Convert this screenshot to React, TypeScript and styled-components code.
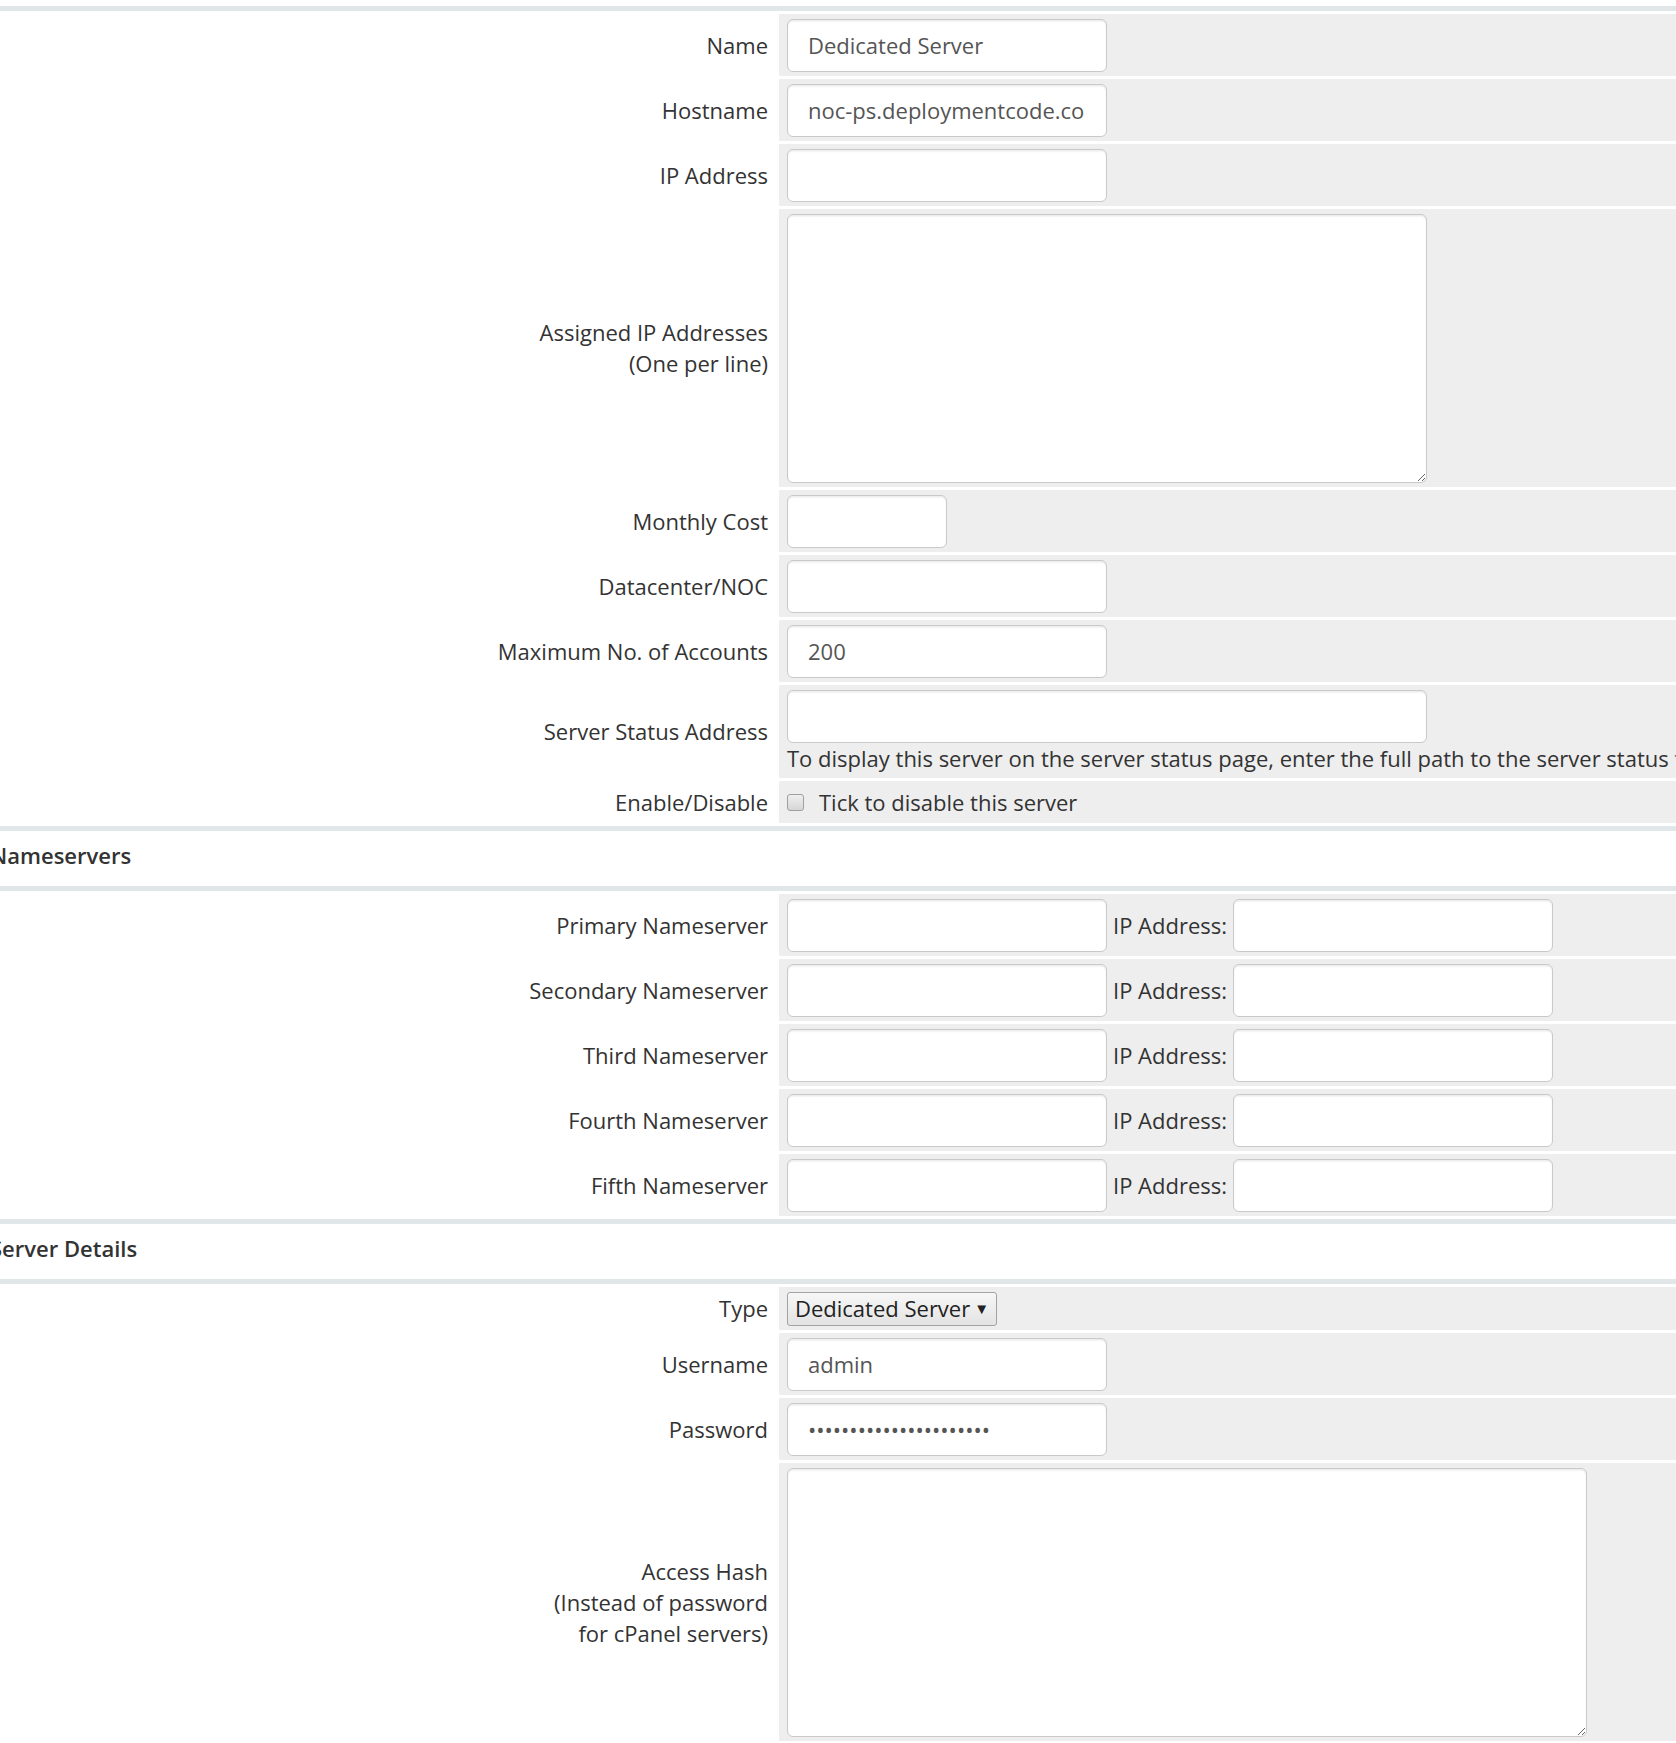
import React from "react";
import styled, { createGlobalStyle } from "styled-components";

// Styles globaux
const GlobalStyle = createGlobalStyle`
  html, body {
    margin: 0;
    padding: 0;
    background: #ffffff;
    overflow: hidden;
  }
  body {
    font-family: "Open Sans", "Noto Sans", "Liberation Sans", sans-serif;
    font-size: 22px;
    line-height: 31px;
    color: #333333;
  }
`;

// Styled Components
const Page = styled.div`
  width: 100%;
  padding-top: 6px;
  overflow: hidden;
`;

const Separator = styled.div`
  height: 5px;
  background-color: #e1e6e8;
`;

const SectionTitle = styled.h3`
  box-sizing: border-box;
  margin: 0 0 0 -10px;
  height: 55px;
  padding-bottom: 6px;
  display: flex;
  align-items: center;
  font-size: 22px;
  font-weight: 600;
  color: #333333;
  white-space: nowrap;
`;

const RowGroup = styled.div`
  display: flex;
  flex-direction: column;
  gap: 3px;
  padding: 3px 0;
`;

const Row = styled.div`
  display: grid;
  grid-template-columns: 779px 1fr;
`;

const Label = styled.div`
  align-self: center;
  text-align: right;
  padding-right: 11px;
  white-space: nowrap;
`;

const Field = styled.div<{ $inline?: boolean }>`
  background-color: #eeeeee;
  padding: 4.5px 8px;
  display: flex;
  flex-direction: ${(p) => (p.$inline ? "row" : "column")};
  align-items: ${(p) => (p.$inline ? "center" : "flex-start")};
  gap: ${(p) => (p.$inline ? "6px" : "0")};
  min-width: 0;
  white-space: nowrap;
`;

const TextInput = styled.input<{ $width?: number }>`
  box-sizing: border-box;
  width: ${(p) => p.$width ?? 320}px;
  height: 53px;
  padding: 0 20px;
  border: 1.5px solid #c9c9c9;
  border-radius: 6px;
  box-shadow: inset 0 1.5px 1.5px rgba(0, 0, 0, 0.08);
  background: #ffffff;
  font-family: inherit;
  font-size: 22px;
  color: #555555;
  outline: none;
`;

const TextArea = styled.textarea<{ $width: number }>`
  box-sizing: border-box;
  width: ${(p) => p.$width}px;
  height: 269px;
  padding: 8px 20px;
  border: 1.5px solid #c9c9c9;
  border-radius: 6px;
  box-shadow: inset 0 1.5px 1.5px rgba(0, 0, 0, 0.08);
  background: #ffffff;
  font-family: inherit;
  font-size: 22px;
  color: #555555;
  outline: none;
  display: block;
`;

const HelpText = styled.span`
  color: #333333;
  line-height: 31px;
`;

const CheckRow = styled.label`
  display: flex;
  align-items: center;
  height: 33px;
  gap: 15px;
`;

const CheckBox = styled.span`
  box-sizing: border-box;
  width: 17px;
  height: 17px;
  border: 1.5px solid #a0a0a0;
  border-radius: 3px;
  background: linear-gradient(#efefef, #d6d6d6);
`;

const SelectBox = styled.div`
  box-sizing: border-box;
  width: 210px;
  height: 34px;
  padding: 0 7px;
  display: flex;
  align-items: center;
  justify-content: space-between;
  border: 1px solid #a3a3a3;
  border-radius: 3px;
  background: linear-gradient(#f7f7f7, #e3e3e3);
  color: #222222;
`;

const Arrow = styled.span`
  font-size: 15px;
  line-height: 1;
  color: #222222;
`;

type SimpleRow = { label: React.ReactNode; value?: string; width?: number };

const mainRows: SimpleRow[] = [
  { label: "Name", value: "Dedicated Server" },
  { label: "Hostname", value: "noc-ps.deploymentcode.co" },
  { label: "IP Address" },
];

const midRows: SimpleRow[] = [
  { label: "Monthly Cost", width: 160 },
  { label: "Datacenter/NOC" },
  { label: "Maximum No. of Accounts", value: "200" },
];

const nameservers = ["Primary", "Secondary", "Third", "Fourth", "Fifth"];

function InputRow({ label, value, width }: SimpleRow) {
  return (
    <Row>
      <Label>{label}</Label>
      <Field>
        <TextInput $width={width} defaultValue={value} />
      </Field>
    </Row>
  );
}

function App() {
  return (
    <React.Fragment>
      <GlobalStyle />
      <Page>
        <Separator />

        {/* Serveur */}
        <RowGroup>
          {mainRows.map((r) => (
            <InputRow key={String(r.label)} {...r} />
          ))}
          <Row>
            <Label>
              Assigned IP Addresses
              <br />
              (One per line)
            </Label>
            <Field>
              <TextArea $width={640} />
            </Field>
          </Row>
          {midRows.map((r) => (
            <InputRow key={String(r.label)} {...r} />
          ))}
          <Row>
            <Label>Server Status Address</Label>
            <Field>
              <TextInput $width={640} />
              <HelpText>
                To display this server on the server status page, enter the full path to the server status folder (required to be uploaded to each server you want to monitor) - eg. https://www.example.com/status/
              </HelpText>
            </Field>
          </Row>
          <Row>
            <Label>Enable/Disable</Label>
            <Field>
              <CheckRow>
                <CheckBox />
                Tick to disable this server
              </CheckRow>
            </Field>
          </Row>
        </RowGroup>

        {/* Nameservers */}
        <Separator />
        <SectionTitle>Nameservers</SectionTitle>
        <Separator />
        <RowGroup>
          {nameservers.map((n) => (
            <Row key={n}>
              <Label>{n} Nameserver</Label>
              <Field $inline>
                <TextInput />
                IP Address:
                <TextInput />
              </Field>
            </Row>
          ))}
        </RowGroup>

        {/* Server Details */}
        <Separator />
        <SectionTitle>Server Details</SectionTitle>
        <Separator />
        <RowGroup>
          <Row>
            <Label>Type</Label>
            <Field>
              <SelectBox>
                Dedicated Server
                <Arrow>▼</Arrow>
              </SelectBox>
            </Field>
          </Row>
          <InputRow label="Username" value="admin" />
          <Row>
            <Label>Password</Label>
            <Field>
              <TextInput type="password" defaultValue="xxxxxxxxxxxxxxxxxxxxxx" />
            </Field>
          </Row>
          <Row>
            <Label>
              Access Hash
              <br />
              (Instead of password
              <br />
              for cPanel servers)
            </Label>
            <Field>
              <TextArea $width={800} />
            </Field>
          </Row>
        </RowGroup>
      </Page>
    </React.Fragment>
  );
}

export default App;
